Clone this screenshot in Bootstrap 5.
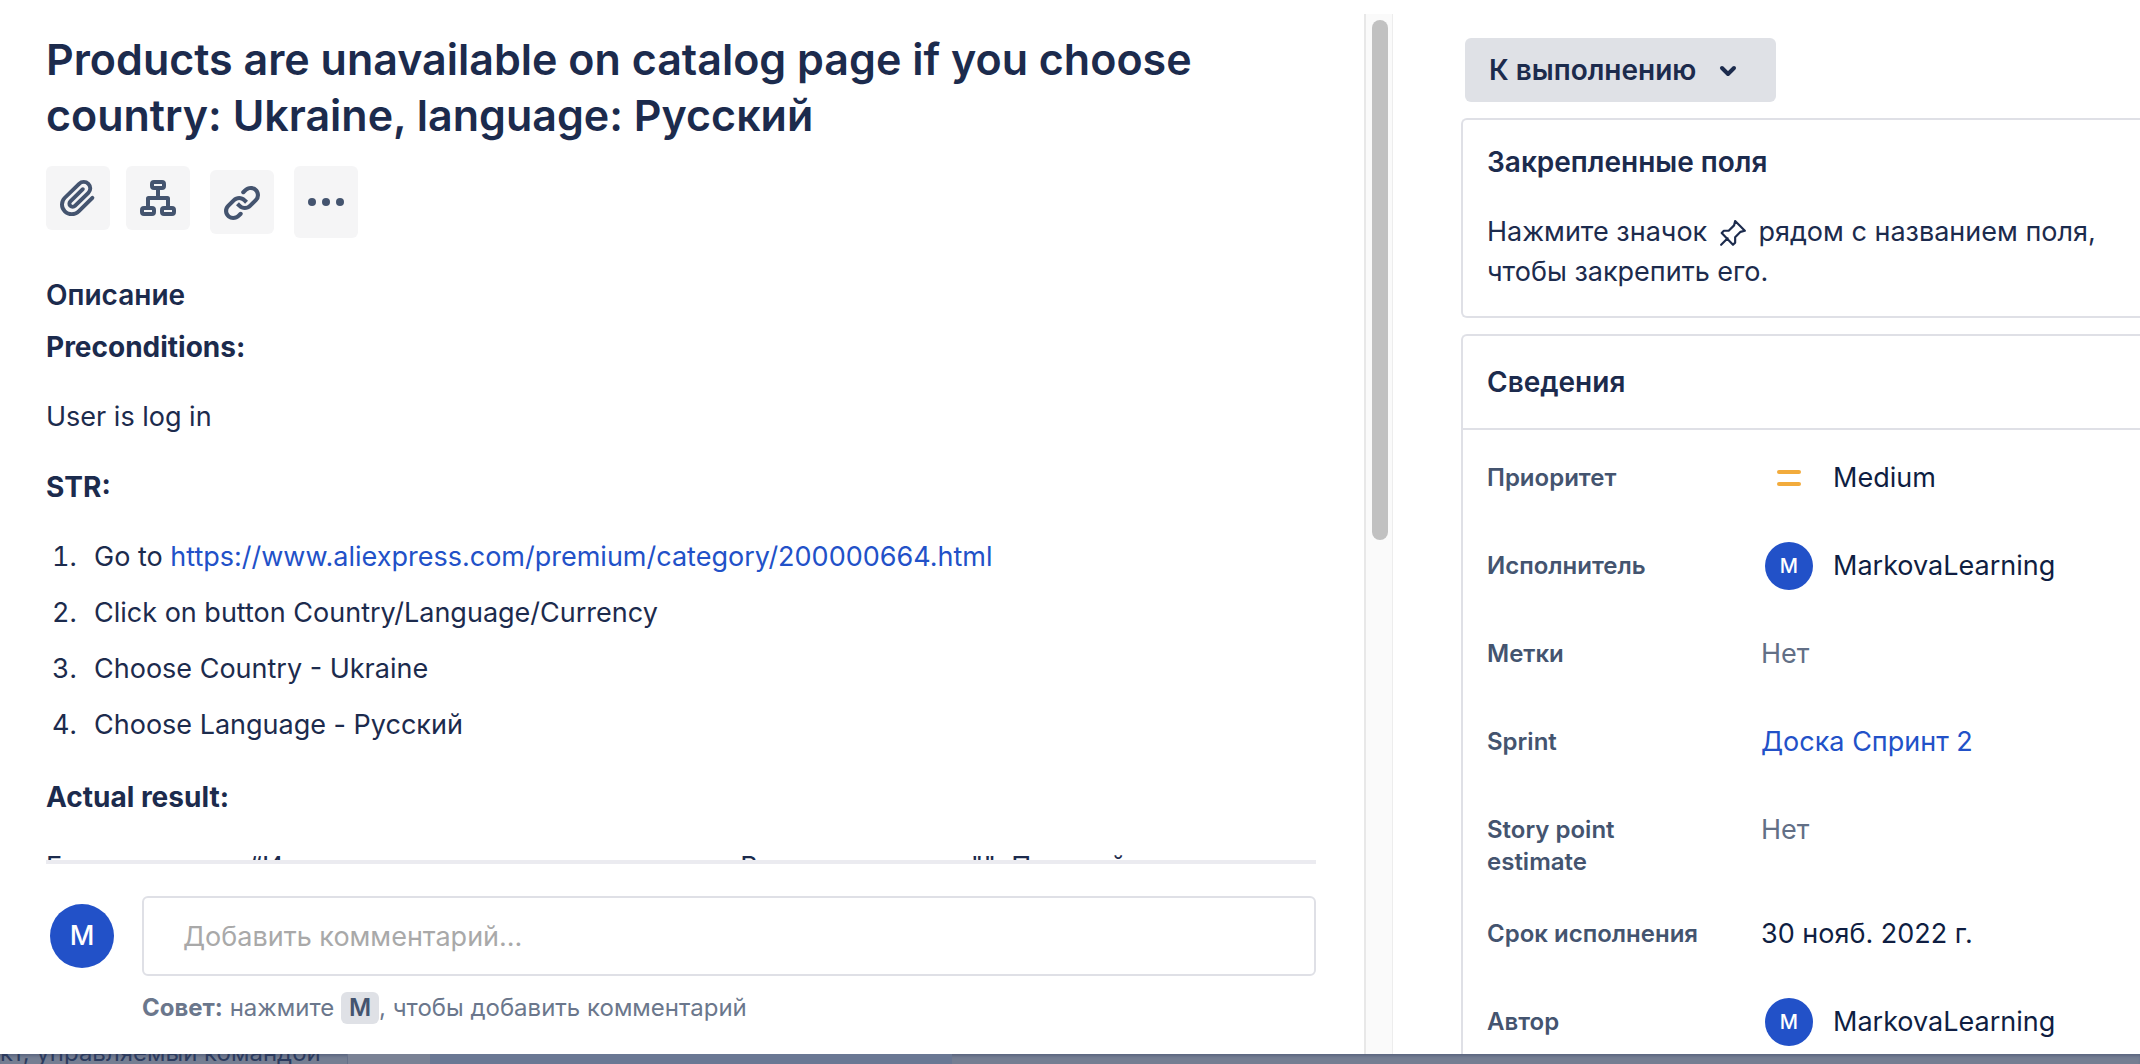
<!DOCTYPE html>
<html lang="ru">
<head>
<meta charset="utf-8">
<meta name="viewport" content="width=device-width, initial-scale=1">
<title>Products are unavailable on catalog page</title>
<link rel="stylesheet" href="https://cdn.jsdelivr.net/npm/bootstrap@5.3.0/dist/css/bootstrap.min.css">
<style>
:root{--ink:#1c2b4d;--ink-deep:#0f1e42;--subtle:#44546f;--muted:#6b778c;--line:#dfe0e6;--blue:#2251c8}
body{font-family:Inter,"Noto Sans",sans-serif;font-size:27px;line-height:40px;color:var(--ink);background:#707b90}
a{color:var(--blue);text-decoration:none}
.shell{height:100vh}
.issue-main{flex:0 0 1364px;padding:31px 48px 0 46px}
.issue-title{font-size:43px;line-height:56px;font-weight:600;color:var(--ink)}
.tools{height:72px;margin-top:23px;gap:20px}
.tool-btn{width:64px;height:64px;background:#f5f5f6;border-radius:6px;border:0;padding:0;color:var(--subtle)}
.tool-tall{height:72px}
.section-h{font-size:28px;line-height:40px;font-weight:600;margin:0}
.desc{min-height:0;padding-top:37px}
.desc p{margin-bottom:30px}
.desc .label-line{font-size:28px;font-weight:700}
.steps{padding-left:38px;margin-bottom:32px}
.steps li{margin-bottom:16px;padding-left:10px}
.comment-bar{border-top:4px solid #ebebf0;padding:32px 0 30px 4px;gap:28px}
.avatar{background:var(--blue);color:#fff;border-radius:50%;flex:none;font-weight:500;display:flex;align-items:center;justify-content:center}
.avatar-lg{width:64px;height:64px;font-size:27px}
.avatar-sm{width:48px;height:48px;font-size:20px}
.comment-input{display:block;height:80px;border:2px solid var(--line);border-radius:6px;font-size:27px;padding:0 39px;color:var(--ink)}
.comment-input::placeholder{color:#a9a9a9;opacity:1}
.hint{font-size:24px;line-height:32px;color:var(--muted)}
.key{background:#dfe1e6;color:var(--subtle);border-radius:6px;padding:0 8px;font:600 24px/32px Inter,sans-serif;display:inline-block}
.scroll-track{width:29px;flex:none;margin-top:14px;background:#fafafa;border-left:2px solid #e8e8e8;border-right:1px solid #ededed;padding:6px 0 0 6px}
.scroll-thumb{width:16px;height:520px;border-radius:8px;background:#c1c1c1}
.issue-side{padding:38px 0 0 68px;min-width:0}
.status-btn{margin-left:4px;height:64px;width:311px;background:#dfe1e6;border-radius:6px;color:var(--ink);font-size:28px;font-weight:600;padding:0 24px;border:0;gap:20px}
.panel{border:2px solid var(--line);border-right:0;border-radius:6px 0 0 6px;margin-top:16px}
.pinned{padding:22px 24px 24px}
.pinned p{margin:30px 0 0}
.panel-h{font-size:28px;line-height:40px;font-weight:600;margin:0}
.panel-head{border-bottom:2px solid var(--line);padding:26px 24px}
.pin{margin:0 4px}
.field-row{padding:24px 24px 0;min-height:88px}
.field-row dt{width:274px;padding:8px 50px 8px 0;flex:none;font-size:24px;line-height:32px;font-weight:600;color:var(--subtle)}
.field-row .wide-label{padding-right:0}
.field-row dd{margin:0;line-height:48px;color:var(--ink-deep)}
.field-row .none{color:#626f86}
.lead-icon{width:48px;height:48px;flex:none;margin:0 20px 0 4px}
.behind{height:10px;flex:none;font-size:24px;line-height:22px;color:#2c3b5e;background:#757e92;box-shadow:inset 0 3px 3px -1px #5b6780}
.behind .board-gap{width:83px;margin-left:26px;border-left:1px solid #667089;background:#7a8295}
.behind .board-col{width:522px;background:#6a7894}
</style>
<script src="https://cdn.jsdelivr.net/npm/bootstrap@5.3.0/dist/js/bootstrap.bundle.min.js"></script>
</head>
<body>
<div class="shell d-flex flex-column overflow-hidden">
  <div class="d-flex flex-grow-1 bg-white overflow-hidden">
    <main class="issue-main d-flex flex-column">
      <h1 class="issue-title mb-0">Products are unavailable on catalog page if you choose country: Ukraine, language: Русский</h1>
      <div class="tools d-flex flex-shrink-0">
        <div class="d-flex gap-3">
          <button class="tool-btn" type="button" aria-label="Прикрепить"><svg width="48" height="48" viewBox="0 0 24 24" fill="currentColor"><path d="M11.643 17.965c-1.530 1.495-4.016 1.496-5.542.004a3.773 3.773 0 01.002-5.412l7.147-6.985a2.316 2.316 0 013.233-.003c.893.873.895 2.282.004 3.153l-6.703 6.550a.653.653 0 01-.914-.008.620.620 0 010-.902l6.229-6.087a.941.941 0 000-1.353.995.995 0 00-1.384 0l-6.230 6.087a2.502 2.502 0 000 3.607 2.643 2.643 0 003.683.009l6.703-6.550a4.074 4.074 0 00-.003-5.859 4.306 4.306 0 00-6.002.003l-7.148 6.985a5.655 5.655 0 00-.001 8.118c2.290 2.237 6.015 2.238 8.308-.004l6.862-6.705a.943.943 0 000-1.354.997.997 0 00-1.384 0l-6.860 6.706z"/></svg></button>
          <button class="tool-btn" type="button" aria-label="Добавить дочернюю задачу"><svg width="48" height="48" viewBox="0 0 48 48" fill="none" stroke="currentColor" stroke-width="4"><rect x="18" y="8" width="12" height="6" rx="2"/><rect x="8" y="34" width="12" height="6" rx="2"/><rect x="28" y="34" width="12" height="6" rx="2"/><path d="M24 14v10M14 34V24.500q0-.5.5-.5h19q.5 0 .5.500V34"/></svg></button>
        </div>
        <button class="tool-btn mt-1" type="button" aria-label="Связать"><svg width="48" height="48" viewBox="0 0 24 24" fill="currentColor"><path d="M12.856 5.457l-.937.92a1.002 1.002 0 000 1.437 1.047 1.047 0 001.463 0l.984-.966c.967-.95 2.542-1.135 3.602-.288a2.540 2.540 0 01.203 3.810l-2.903 2.852a2.646 2.646 0 01-3.696 0l-1.110-1.090L9 13.570l1.108 1.089c1.822 1.788 4.802 1.788 6.622 0l2.905-2.852a4.558 4.558 0 00-.357-6.820c-1.893-1.517-4.695-1.226-6.422.470"/><path d="M11.144 19.543l.937-.920a1.002 1.002 0 000-1.437 1.047 1.047 0 00-1.462 0l-.985.966c-.967.950-2.542 1.135-3.602.288a2.540 2.540 0 01-.203-3.810l2.903-2.852a2.646 2.646 0 013.696 0l1.110 1.090L15 11.430l-1.108-1.089c-1.822-1.788-4.802-1.788-6.622 0l-2.905 2.852a4.558 4.558 0 00.357 6.820c1.893 1.517 4.695 1.226 6.422-.470"/></svg></button>
        <button class="tool-btn tool-tall" type="button" aria-label="Действия"><svg width="48" height="48" viewBox="0 0 48 48" fill="currentColor"><circle cx="10" cy="24" r="4"/><circle cx="24" cy="24" r="4"/><circle cx="38" cy="24" r="4"/></svg></button>
      </div>
      <section class="desc flex-grow-1 overflow-hidden">
        <h2 class="section-h">Описание</h2>
        <p class="label-line pt-2 mt-1">Preconditions:</p>
        <p>User is log in</p>
        <p class="label-line">STR:</p>
        <ol class="steps">
          <li>Go to <a href="#">https://www.aliexpress.com/premium/category/200000664.html</a></li>
          <li>Click on button Country/Language/Currency</li>
          <li>Choose Country - Ukraine</li>
          <li>Choose Language - Русский</li>
        </ol>
        <p class="label-line">Actual result:</p>
        <p class="text-nowrap">Если смотреть “Изменить страну и язык на каталог В каталоге пусто ""&nbsp; Полевой</p>
      </section>
      <form class="comment-bar d-flex flex-shrink-0">
        <span class="avatar avatar-lg mt-2">M</span>
        <div class="flex-grow-1">
          <input class="comment-input w-100" type="text" aria-label="Комментарий" placeholder="Добавить комментарий...">
          <div class="hint mt-3"><strong>Совет:</strong> нажмите <kbd class="key">M</kbd>, чтобы добавить комментарий</div>
        </div>
      </form>
    </main>
    <div class="scroll-track"><div class="scroll-thumb"></div></div>
    <aside class="issue-side flex-grow-1">
      <button class="status-btn d-flex align-items-center" type="button">К выполнению <svg width="24" height="24" viewBox="0 0 24 24" fill="none" stroke="currentColor" stroke-width="4" stroke-linecap="round" stroke-linejoin="round"><path d="M6 10l6 6 6-6"/></svg></button>
      <section class="panel pinned">
        <h2 class="panel-h">Закрепленные поля</h2>
        <p>Нажмите значок <svg class="pin" width="28" height="28" viewBox="-1 0 26 26" fill="none" stroke="currentColor" stroke-width="2" stroke-linejoin="round" stroke-linecap="round"><path d="M1 23l6-6M14 1l9 9-4 1-5 5v5l-2 2L1.500 12l2-2H8l5-5z"/></svg> рядом с названием поля,<br>чтобы закрепить его.</p>
      </section>
      <section class="panel">
        <div class="panel-head"><h2 class="panel-h">Сведения</h2></div>
        <dl class="mb-0">
          <div class="field-row d-flex"><dt>Приоритет</dt><dd class="d-flex"><svg class="lead-icon" viewBox="0 0 48 48" fill="#f2ab3c"><rect x="12" y="16" width="24" height="4" rx="2"/><rect x="12" y="28" width="24" height="4" rx="2"/></svg>Medium</dd></div>
          <div class="field-row d-flex"><dt>Исполнитель</dt><dd class="d-flex"><span class="avatar avatar-sm lead-icon">M</span>MarkovaLearning</dd></div>
          <div class="field-row d-flex"><dt>Метки</dt><dd class="none">Нет</dd></div>
          <div class="field-row d-flex"><dt>Sprint</dt><dd><a href="#">Доска Спринт 2</a></dd></div>
          <div class="field-row d-flex"><dt>Story point estimate</dt><dd class="none">Нет</dd></div>
          <div class="field-row d-flex"><dt class="wide-label">Срок исполнения</dt><dd>30 нояб. 2022 г.</dd></div>
          <div class="field-row d-flex"><dt>Автор</dt><dd class="d-flex"><span class="avatar avatar-sm lead-icon">M</span>MarkovaLearning</dd></div>
        </dl>
      </section>
    </aside>
  </div>
  <footer class="behind d-flex overflow-hidden"><span class="align-self-end">кт, управляемый командой</span><span class="board-gap"></span><span class="board-col"></span></footer>
</div>
</body>
</html>
